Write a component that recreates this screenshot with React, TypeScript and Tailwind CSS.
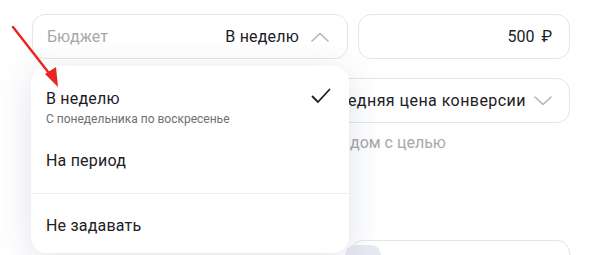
import React from "react";

const font = { fontFamily: "Roboto, 'Noto Sans', sans-serif" };

function ChevronUp({ className = "" }: { className?: string }) {
  return (
    <svg className={className} width="18" height="10" viewBox="0 0 18 10" fill="none">
      <path d="M1 9L9 1.5L17 9" stroke="#b5b5b5" strokeWidth="1.6" strokeLinecap="round" strokeLinejoin="round" />
    </svg>
  );
}

function ChevronDown({ className = "" }: { className?: string }) {
  return (
    <svg className={className} width="18" height="10" viewBox="0 0 18 10" fill="none">
      <path d="M1 1L9 8.5L17 1" stroke="#b5b5b5" strokeWidth="1.6" strokeLinecap="round" strokeLinejoin="round" />
    </svg>
  );
}

export default function App() {
  return (
    <div className="relative w-[600px] h-[255px] overflow-hidden bg-white text-[#21201f]" style={font}>
      <div className="pl-[32px] pr-[30px] pt-[14px] flex flex-col">
        {/* Row 1 */}
        <div className="flex gap-[10px]">
          <div className="w-[316px] h-[45px] rounded-[13px] border border-[#e3e5ea] flex items-center pl-[14px] pr-[18px]">
            <span className="text-[16px] text-[#a8a8a8]">Бюджет</span>
            <span className="ml-auto text-[16px] tracking-[0.2px]">В неделю</span>
            <ChevronUp className="ml-[12px]" />
          </div>
          <div className="flex-1 h-[45px] rounded-[13px] border border-[#e3e5ea] flex items-center justify-end pr-[17px]">
            <span className="text-[16px]">500</span>
            <span className="text-[16px] ml-[7px]">₽</span>
          </div>
        </div>
        {/* Row 2 */}
        <div className="mt-[19px] h-[45px] rounded-[13px] border border-[#e3e5ea] flex items-center pl-[14px] pr-[17px]">
          <span className="ml-auto text-[16px] tracking-[0.45px]">Средняя цена конверсии</span>
          <ChevronDown className="ml-[8px]" />
        </div>
        {/* Hint */}
        <div className="mt-[10px] flex text-[16px] text-[#a8a8a8] leading-5">
          <span className="w-[318px] text-right">Оплата за конверсии ря</span>
          <span>дом с целью</span>
        </div>
        {/* Bottom row */}
        <div className="mt-[87px] flex gap-[2px]">
          <div className="w-[316px]" />
          <div className="relative flex-1 h-[45px] rounded-[13px] border border-[#e3e5ea]">
            <div className="absolute left-[-6px] top-[4px] w-[36px] h-[30px] rounded-[10px] bg-[#e7eaf0]" />
          </div>
        </div>
      </div>

      {/* Dropdown */}
      <div className="absolute left-[31px] top-[66px] w-[318px] h-[187px] rounded-[16px] bg-white shadow-[0_6px_36px_rgba(30,50,90,0.14)]">
        <div className="pt-[23px] pl-[15px] pr-[18px] relative">
          <div className="text-[16px] leading-5 tracking-[0.2px]">В неделю</div>
          <div className="text-[12px] leading-[14px] mt-[3px] text-[#6f6f6f]">С понедельника по воскресенье</div>
          <svg className="absolute right-[18px] top-[22px]" width="20" height="16" viewBox="0 0 20 16" fill="none">
            <path d="M1.5 8.5L7 14L18.5 1.5" stroke="#21201f" strokeWidth="1.8" strokeLinecap="round" strokeLinejoin="round" />
          </svg>
        </div>
        <div className="pl-[15px] mt-[25px] text-[16px] leading-5 tracking-[0.2px]">На период</div>
        <div className="mt-[22px] border-t border-[#ececec]" />
        <div className="pl-[15px] mt-[22px] text-[16px] leading-5 tracking-[0.2px]">Не задавать</div>
      </div>

      {/* Red arrow */}
      <svg className="absolute left-0 top-0" width="80" height="100" viewBox="0 0 80 100" fill="none">
        <line x1="13" y1="27" x2="52" y2="77" stroke="#e8251f" strokeWidth="2.4" strokeLinecap="round" />
        <polygon points="58,87 45,74 56,67" fill="#e8251f" />
      </svg>
    </div>
  );
}
